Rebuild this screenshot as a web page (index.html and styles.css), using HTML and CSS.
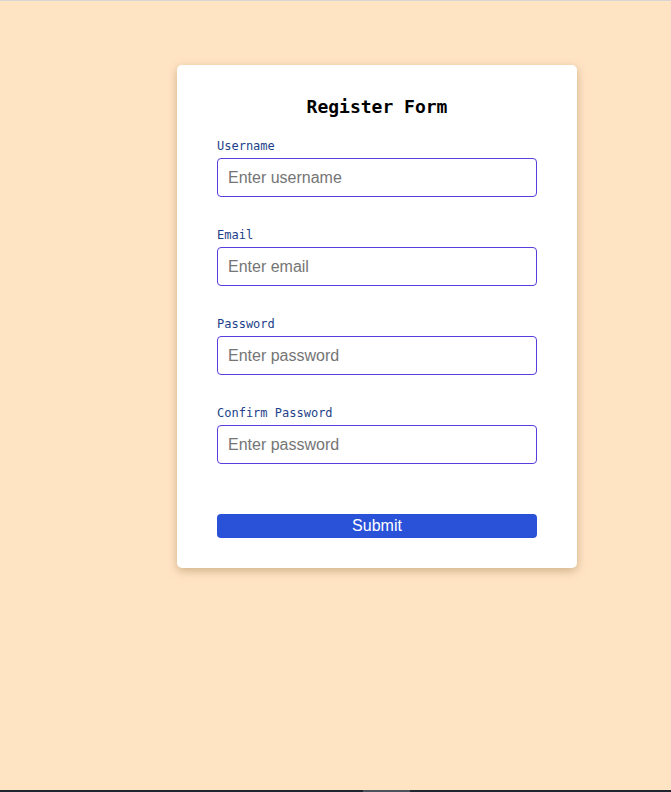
FILE: index.html
```html
<!DOCTYPE html>
<html lang="en">
<head>
<meta charset="utf-8">
<title>Register Form</title>
<link rel="stylesheet" href="styles.css">
</head>
<body>
<main class="page">
  <form class="card">
    <h1 class="title">Register Form</h1>
    <div class="field">
      <label class="label" for="u">Username</label>
      <input class="input" id="u" type="text" placeholder="Enter username">
    </div>
    <div class="field">
      <label class="label" for="e">Email</label>
      <input class="input" id="e" type="email" placeholder="Enter email">
    </div>
    <div class="field">
      <label class="label" for="p">Password</label>
      <input class="input" id="p" type="password" placeholder="Enter password">
    </div>
    <div class="field">
      <label class="label" for="c">Confirm Password</label>
      <input class="input" id="c" type="password" placeholder="Enter password">
    </div>
    <button class="submit" type="button">Submit</button>
  </form>
</main>
<div class="bottombar"><span class="thumb"></span></div>
</body>
</html>
```
FILE: styles.css
```css
* { box-sizing: border-box; }
html, body { height: 100%; }
body {
  margin: 0;
  background: #ffe4c4;
  border-top: 1px solid #d6d6d6;
  overflow: hidden;
}
.page {
  padding: 64px 0 0 177px;
}
.card {
  width: 400px;
  background: #fff;
  border-radius: 5px;
  box-shadow: 0 3px 10px rgba(120, 80, 30, 0.35);
  padding: 30px 40px 30px;
  display: flex;
  flex-direction: column;
}
.title {
  margin: 0 0 20px;
  font-family: "DejaVu Sans Mono", "Liberation Mono", monospace;
  font-size: 18px;
  line-height: 24px;
  font-weight: bold;
  text-align: center;
  color: #000;
}
.field {
  display: flex;
  flex-direction: column;
  margin-bottom: 31px;
}
.field:last-of-type { margin-bottom: 50px; }
.label {
  font-family: "DejaVu Sans Mono", "Liberation Mono", monospace;
  font-size: 12px;
  line-height: 14px;
  color: #1d3f8a;
  margin-bottom: 5px;
}
.input {
  height: 39px;
  width: 100%;
  border: 1px solid #5b3cdc;
  border-radius: 4px;
  padding: 0 10px;
  font-family: "Liberation Sans", Arial, sans-serif;
  font-size: 16px;
  color: #222;
  background: #fff;
  outline: none;
}
.input::placeholder { color: #757575; }
.submit {
  height: 24px;
  width: 100%;
  border: none;
  border-radius: 4px;
  background: #2952d9;
  color: #fff;
  font-family: "Liberation Sans", Arial, sans-serif;
  font-size: 16px;
  line-height: 24px;
  padding: 0;
}
.bottombar {
  position: fixed;
  left: 0;
  right: 0;
  bottom: 0;
  height: 2px;
  background: #1f2630;
}
.thumb {
  position: absolute;
  left: 363px;
  width: 47px;
  top: 0;
  bottom: 0;
  background: #4b525c;
}
```
